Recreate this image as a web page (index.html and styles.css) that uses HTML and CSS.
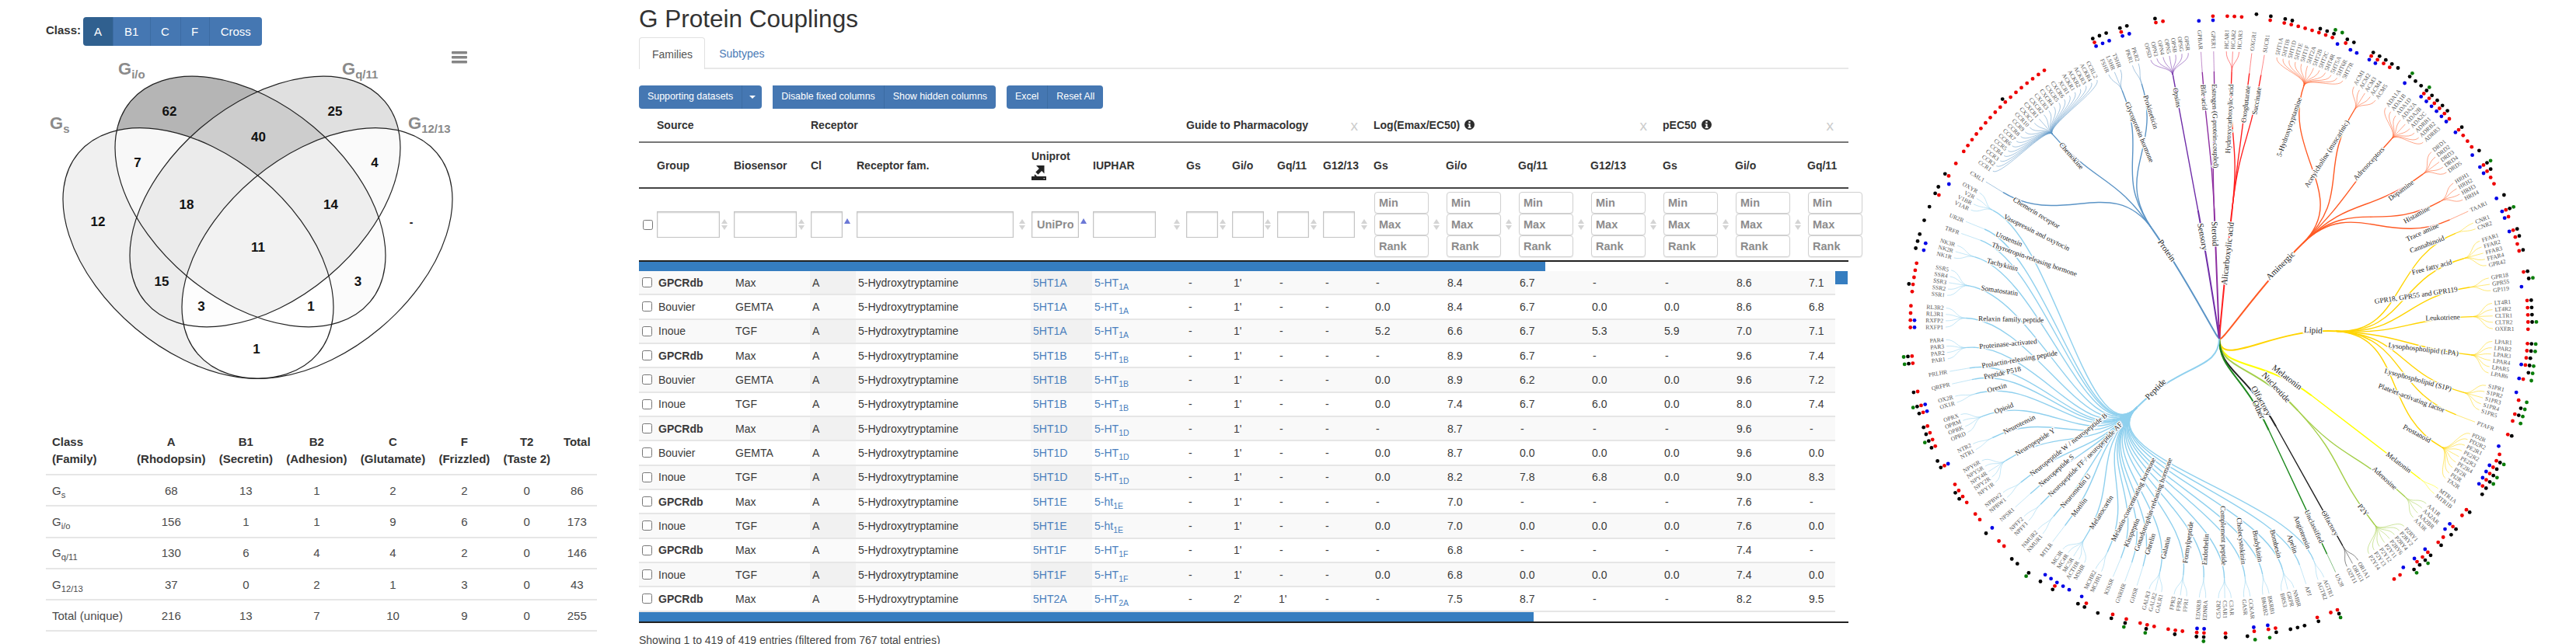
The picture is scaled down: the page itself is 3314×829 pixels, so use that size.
FILE: index.html
```html
<!DOCTYPE html>
<html lang="en">
<head>
  <meta charset="UTF-8" />
  <title>G Protein Couplings</title>
  <link rel="stylesheet" href="styles.css">
</head>
<body>
<div class="page">

  <div class="left">
    <div class="class-filter">
      <span class="class-label">Class:</span>
      <div class="btn-group class-btns">
        <a class="btn active">A</a><a class="btn">B1</a><a class="btn">C</a><a class="btn">F</a><a class="btn">Cross</a>
      </div>
    </div>

    <svg class="venn" viewBox="59 59 620 440" width="620" height="440">
      <defs>
        <ellipse id="e-s" cx="255" cy="326" rx="201" ry="126" transform="rotate(40 255 326)" />
        <ellipse id="e-i" cx="322" cy="259.5" rx="201" ry="126" transform="rotate(40 322 259.5)" />
        <ellipse id="e-q" cx="341" cy="259.5" rx="201" ry="126" transform="rotate(-40 341 259.5)" />
        <ellipse id="e-t" cx="408" cy="326" rx="201" ry="126" transform="rotate(-40 408 326)" />
        <clipPath id="c-s"><use href="#e-s" /></clipPath>
        <clipPath id="c-i"><use href="#e-i" /></clipPath>
        <clipPath id="c-q"><use href="#e-q" /></clipPath>
        <clipPath id="c-t"><use href="#e-t" /></clipPath>
      </defs>
      <g id="venn-regions"></g>
      <g class="venn-lines">
        <use href="#e-s" /><use href="#e-i" /><use href="#e-q" /><use href="#e-t" />
      </g>
      <g class="venn-names">
        <text x="64" y="166">G<tspan class="venn-sub" dy="5">s</tspan></text>
        <text x="152" y="96">G<tspan class="venn-sub" dy="5">i/o</tspan></text>
        <text x="440" y="96">G<tspan class="venn-sub" dy="5">q/11</tspan></text>
        <text x="525" y="166">G<tspan class="venn-sub" dy="5">12/13</tspan></text>
      </g>
      <g class="venn-nums">
        <text x="218" y="143">62</text>
        <text x="431" y="143">25</text>
        <text x="332.5" y="176">40</text>
        <text x="177" y="209">7</text>
        <text x="482" y="209">4</text>
        <text x="240" y="263">18</text>
        <text x="425.5" y="263">14</text>
        <text x="126" y="285">12</text>
        <text x="529" y="286" class="venn-dash">-</text>
        <text x="332" y="318">11</text>
        <text x="208" y="362">15</text>
        <text x="460.5" y="362">3</text>
        <text x="259" y="394">3</text>
        <text x="400" y="394">1</text>
        <text x="330" y="449">1</text>
      </g>
      <g class="venn-menu">
        <rect x="581" y="66" width="20" height="3.5" rx="1" />
        <rect x="581" y="72" width="20" height="3.5" rx="1" />
        <rect x="581" y="78" width="20" height="3.5" rx="1" />
      </g>
    </svg>

    <table class="summary">
      <thead>
        <tr><th>Class<br>(Family)</th><th>A<br>(Rhodopsin)</th><th>B1<br>(Secretin)</th><th>B2<br>(Adhesion)</th><th>C<br>(Glutamate)</th><th>F<br>(Frizzled)</th><th>T2<br>(Taste 2)</th><th>Total<br>&nbsp;</th></tr>
      </thead>
      <tbody>
        <tr><td>G<sub>s</sub></td><td>68</td><td>13</td><td>1</td><td>2</td><td>2</td><td>0</td><td>86</td></tr>
        <tr><td>G<sub>i/o</sub></td><td>156</td><td>1</td><td>1</td><td>9</td><td>6</td><td>0</td><td>173</td></tr>
        <tr><td>G<sub>q/11</sub></td><td>130</td><td>6</td><td>4</td><td>4</td><td>2</td><td>0</td><td>146</td></tr>
        <tr><td>G<sub>12/13</sub></td><td>37</td><td>0</td><td>2</td><td>1</td><td>3</td><td>0</td><td>43</td></tr>
        <tr><td>Total (unique)</td><td>216</td><td>13</td><td>7</td><td>10</td><td>9</td><td>0</td><td>255</td></tr>
      </tbody>
    </table>
  </div>

  <div class="main">
    <h2 class="title">G Protein Couplings</h2>
    <ul class="tabs">
      <li class="tab active">Families</li>
      <li class="tab">Subtypes</li>
    </ul>

    <div class="toolbar">
      <div class="btn-group">
        <a class="btn">Supporting datasets</a><a class="btn btn-caret"><span class="caret"></span></a>
      </div>
      <div class="btn-group square-left">
        <a class="btn">Disable fixed columns</a><a class="btn">Show hidden columns</a>
      </div>
      <div class="btn-group">
        <a class="btn">Excel</a><a class="btn">Reset All</a>
      </div>
    </div>

    <table class="couplings">
      <colgroup>
        <col class="col-check"><col class="col-source"><col class="col-source"><col class="col-cl"><col class="col-fam"><col class="col-uni"><col class="col-iuphar">
        <col class="col-cl"><col class="col-gi"><col class="col-cl"><col class="col-g12">
        <col class="col-val"><col class="col-val"><col class="col-val"><col class="col-val">
        <col class="col-val"><col class="col-val"><col class="col-last"><col class="col-gutter">
      </colgroup>
      <thead>
        <tr class="head-groups">
          <th></th>
          <th colspan="2">Source</th>
          <th colspan="4">Receptor</th>
          <th colspan="4"><span class="hide-x">x</span>Guide to Pharmacology</th>
          <th colspan="4"><span class="hide-x">x</span>Log(Emax/EC50)
            <svg class="info" viewBox="0 0 13 13" width="13" height="13"><circle cx="6.5" cy="6.5" r="6.5" /><rect class="info-i" x="5.4" y="2" width="2.2" height="2" /><path class="info-i" d="M4.6 5.2h3v4.4h1v1.3H4.6V9.6h1V6.5h-1z" /></svg>
          </th>
          <th colspan="4"><span class="hide-x">x</span>pEC50
            <svg class="info" viewBox="0 0 13 13" width="13" height="13"><circle cx="6.5" cy="6.5" r="6.5" /><rect class="info-i" x="5.4" y="2" width="2.2" height="2" /><path class="info-i" d="M4.6 5.2h3v4.4h1v1.3H4.6V9.6h1V6.5h-1z" /></svg>
          </th>
        </tr>
        <tr class="head-cols">
          <th></th><th>Group</th><th>Biosensor</th><th>Cl</th><th>Receptor fam.</th>
          <th>Uniprot
            <svg class="uni-icon" viewBox="0 0 19 20" width="19" height="20">
              <path d="M6 1h10.5v10.5l-3.4-3.4-4.6 4.6-3.2-3.2 4.6-4.6z" />
              <path d="M4.6 12.4l2.2 2.2-1.3 1.3-2.2-2.2z" />
              <rect y="15" width="19" height="5" rx="0.5" />
              <rect class="uni-notch" x="15.5" y="17" width="1.6" height="1.2" />
            </svg>
          </th>
          <th>IUPHAR</th><th>Gs</th><th>Gi/o</th><th>Gq/11</th><th>G12/13</th>
          <th>Gs</th><th>Gi/o</th><th>Gq/11</th><th>G12/13</th>
          <th>Gs</th><th>Gi/o</th><th colspan="2">Gq/11</th>
        </tr>
        <tr class="head-filters" id="filters"></tr>
      </thead>
      <tbody id="rows"></tbody>
    </table>

    <div class="info-line">Showing 1 to 419 of 419 entries (filtered from 767 total entries)</div>
  </div>

  <div class="tree-wrap">
    <svg id="tree" class="tree" viewBox="0 0 936 829" width="936" height="829"></svg>
  </div>

</div>
<script src="app.js"></script>
</body>
</html>
```

FILE: styles.css
```css
html, body {
  margin: 0;
  height: 829px;
  overflow: hidden;
  background: #fff;
}
body {
  font-family: "Liberation Sans", Arial, sans-serif;
  font-size: 14px;
  color: #3a3a3a;
}
sub {
  font-size: 75%;
  line-height: 0;
}
.page {
  display: flex;
  height: 829px;
}

/* buttons */
.btn-group {
  display: inline-flex;
  border-radius: 4px;
  overflow: hidden;
}
.btn {
  display: block;
  background: #4577b2;
  color: #fff;
  border-left: 1px solid #3c6ca3;
}
.btn:first-child {
  border-left: 0;
}
.btn.active {
  background: #30608f;
}

/* left column */
.left {
  width: 822px;
  flex: none;
  box-sizing: border-box;
  padding: 22px 0 0 59px;
}
.class-filter {
  display: flex;
  align-items: center;
  height: 37px;
}
.class-label {
  width: 48px;
  margin-top: -5px;
  font-size: 15px;
  font-weight: bold;
  color: #333;
}
.class-btns .btn {
  font-size: 15px;
  line-height: 37px;
  text-align: center;
}
.class-btns .btn:nth-child(1) { width: 38px; }
.class-btns .btn:nth-child(2) { width: 46.5px; }
.class-btns .btn:nth-child(3) { width: 38px; }
.class-btns .btn:nth-child(4) { width: 36px; }
.class-btns .btn:nth-child(5) { width: 67.5px; }

.venn {
  display: block;
}
.venn-lines use {
  fill: none;
  stroke: #222;
  stroke-width: 1.2;
}
.venn-names text {
  font-size: 22px;
  font-weight: bold;
  fill: #8a8a8a;
}
.venn-sub {
  font-size: 15px;
}
.venn-nums text {
  font-size: 17px;
  font-weight: bold;
  fill: #111;
  text-anchor: middle;
  dominant-baseline: central;
}
.venn-nums .venn-dash {
  font-size: 14px;
}
.venn-menu rect {
  fill: #858585;
}

.summary {
  width: 709px;
  margin-top: 51px;
  border-collapse: separate;
  border-spacing: 0;
  font-size: 15px;
}
.summary th, .summary td {
  padding: 0 8px;
  text-align: center;
}
.summary th {
  height: 59px;
  padding-bottom: 1px;
  line-height: 22px;
  font-weight: bold;
  color: #333;
  border-bottom: 2px solid #e6e6e6;
}
.summary td {
  height: 38.3px;
  color: #4a4a4a;
  border-bottom: 2px solid #e6e6e6;
}
.summary th:first-child, .summary td:first-child {
  text-align: left;
}

/* main column */
.main {
  width: 1556px;
  flex: none;
}
.title {
  margin: 0;
  height: 48px;
  font-size: 31.5px;
  line-height: 48px;
  font-weight: normal;
  color: #333;
}
.tabs {
  display: flex;
  height: 41px;
  margin: 0;
  padding: 0;
  list-style: none;
  box-sizing: border-box;
  border-bottom: 2px solid #e8e8e8;
}
.tab {
  height: 41px;
  box-sizing: border-box;
  padding: 12px 18px 0;
  line-height: 18px;
  color: #4a7ab5;
}
.tab.active {
  padding: 12px 15px 0 16px;
  color: #555;
  background: #fff;
  border: 1px solid #e0e0e0;
  border-bottom: 0;
  border-radius: 4px 4px 0 0;
}

.toolbar {
  display: flex;
  gap: 14px;
  height: 30px;
  margin-top: 21px;
}
.toolbar .btn {
  padding: 0 11px;
  font-size: 12.4px;
  line-height: 29px;
}
.toolbar .btn-caret {
  width: 26px;
  padding: 0;
  box-sizing: border-box;
}
.caret {
  display: block;
  width: 0;
  margin: 13px auto 0;
  border-top: 4px solid #fff;
  border-left: 4px solid transparent;
  border-right: 4px solid transparent;
}
.square-left {
  border-radius: 0 4px 4px 0;
}

/* couplings table */
.couplings {
  width: 1556px;
  table-layout: fixed;
  border-collapse: separate;
  border-spacing: 0;
}
.col-check { width: 22px; }
.col-source { width: 99px; }
.col-cl { width: 59px; }
.col-fam { width: 225px; }
.col-uni { width: 79px; }
.col-iuphar { width: 120px; }
.col-gi { width: 58px; }
.col-g12 { width: 65px; }
.col-val { width: 93px; }
.col-last { width: 37px; }
.col-gutter { width: 17px; }

.couplings th {
  position: relative;
  box-sizing: border-box;
  padding: 0 0 0 1px;
  text-align: left;
  font-weight: bold;
  color: #333;
  white-space: nowrap;
}
.head-groups th {
  height: 44px;
  border-bottom: 2px solid #777;
}
.hide-x {
  float: right;
  margin: 1px 19px 0 0;
  font-size: 19px;
  line-height: 16px;
  font-weight: normal;
  color: #ccc;
}
.info {
  margin: -3px 0 0 2px;
  vertical-align: middle;
}
.info circle {
  fill: #2c2c2c;
}
.info-i {
  fill: #fff;
}
.head-cols th {
  height: 59px;
  border-bottom: 2px solid #444;
}
.uni-icon {
  display: block;
  margin-top: 3px;
  fill: #222;
}
.uni-notch {
  fill: #ccc;
}
.head-filters th {
  height: 94px;
  border-bottom: 2px solid #222;
}
.head-filters input[type="checkbox"] {
  display: block;
  margin: 0 0 0 4px;
}
.flt {
  display: block;
  box-sizing: border-box;
  height: 34px;
  padding: 0 6px;
  font: bold 14.5px "Liberation Sans", Arial, sans-serif;
  border: 1px solid #c4c4c4;
  box-shadow: inset 0 1px 2px rgba(0, 0, 0, 0.2);
  background: #fff;
}
.flt::placeholder, .rng::placeholder {
  color: #8c8c8c;
  opacity: 1;
}
.flt-md { width: 81px; }
.flt-sm { width: 41px; }
.flt-lg { width: 202px; }
.flt-uni { width: 61px; }
.rng {
  display: block;
  box-sizing: border-box;
  width: 70px;
  height: 28px;
  margin-left: 1px;
  padding: 0 5px;
  font: bold 14.5px "Liberation Sans", Arial, sans-serif;
  border: 1px solid #d0d0d0;
  border-radius: 4px;
  box-shadow: 0 1px 1px rgba(0, 0, 0, 0.08);
  background: #fff;
}
.sort {
  position: absolute;
  top: 50%;
  right: 7px;
  width: 8px;
  height: 14px;
  margin-top: -7px;
}
.sort::before, .sort::after {
  content: "";
  display: block;
  width: 0;
  border-left: 4px solid transparent;
  border-right: 4px solid transparent;
}
.sort::before {
  border-bottom: 6px solid #d4d4d4;
  margin-bottom: 2px;
}
.sort::after {
  border-top: 6px solid #d4d4d4;
}
.sort.asc::before {
  margin-top: -1px;
  border-bottom: 7px solid #6b78d6;
}
.sort.asc::after {
  display: none;
}

.couplings td {
  box-sizing: border-box;
  height: 31.33px;
  padding: 0 0 0 3px;
  white-space: nowrap;
  overflow: hidden;
  border-bottom: 2px solid #e6e6e6;
}
.couplings td a {
  color: #4a7fbd;
}
.couplings td.check {
  padding-left: 4px;
}
.couplings td.check input {
  display: block;
  margin: 0;
}
.couplings td.dash {
  padding-left: 4px;
}
.couplings td.sorted {
  background: #fafafa;
}
#rows tr:nth-child(even) td {
  background: #f9f9f9;
}
#rows tr:nth-child(even) td.sorted {
  background: #f1f1f1;
}
#rows tr td.gutter {
  padding: 0;
  vertical-align: top;
  background: #fff;
  border-bottom: 0;
}
.thumb {
  width: 16px;
  height: 17px;
  background: #357dc0;
}
#rows tr td.bar-cell {
  height: 12px;
  padding: 0;
  background: #fff;
  border-bottom: 0;
}
#rows tr:last-child td.bar-cell {
  height: 14px;
  border-bottom: 2px solid #222;
}
.bar {
  height: 12px;
  background: #357dc0;
}
.info-line {
  margin-top: 12px;
  line-height: 20px;
  font-size: 14px;
  color: #444;
}

/* radial tree */
.tree-wrap {
  flex: 1;
}
.tree {
  display: block;
}
.tree path {
  fill: none;
}
.link-cat { stroke-width: 2; }
.link-fam { stroke-width: 1.4; }
.link-leaf { stroke-width: 0.9; stroke-opacity: 0.6; }
.link-stub { stroke: #5f1a8c; stroke-width: 3.2; }
.tree text {
  font-family: "Liberation Serif", "Times New Roman", serif;
  dominant-baseline: central;
}
.tree .lbl-leaf {
  font-size: 7.6px;
  fill: #555;
}
.tree .lbl-fam, .tree .lbl-cat {
  paint-order: stroke;
  stroke: #fff;
  stroke-width: 2.5px;
  stroke-linejoin: round;
}
.tree .lbl-fam {
  font-size: 9.2px;
  fill: #222;
}
.tree .lbl-cat {
  font-size: 11px;
  fill: #222;
}
.dot-b { fill: #0000e6; }
.dot-r { fill: #ee0000; }
.dot-k { fill: #000; }
.dot-g { fill: #0a7d0a; }
```

FILE: app.js
```js
// Venn regions, painted from single sets up to the full overlap
const vennRegions = [
  ["s", "#f0f0f0"], ["i", "#b5b5b5"], ["q", "#e0e0e0"], ["t", "#ffffff"],
  ["si", "#f8f8f8"], ["sq", "#ececec"], ["st", "#ffffff"], ["iq", "#cdcdcd"], ["it", "#fbfbfb"], ["qt", "#fafafa"],
  ["siq", "#ebebeb"], ["sit", "#ffffff"], ["sqt", "#fdfdfd"], ["iqt", "#eeeeee"],
  ["siqt", "#f2f2f2"]
];
document.getElementById("venn-regions").innerHTML = vennRegions.map(([sets, fill]) => {
  const open = [...sets].map(c => `<g clip-path="url(#c-${c})">`).join("");
  return `${open}<rect x="59" y="59" width="620" height="440" fill="${fill}" />${"</g>".repeat(sets.length)}`;
}).join("");

// Filter row of the couplings table
const sort = `<span class="sort"></span>`;
const sortAsc = `<span class="sort asc"></span>`;
const flt = (size, arrow = sort, ph = "") => `<th><input class="flt ${size}" placeholder="${ph}" />${arrow}</th>`;
const rng = `<th><input class="rng" placeholder="Min" /><input class="rng" placeholder="Max" /><input class="rng" placeholder="Rank" />${sort}</th>`;
document.getElementById("filters").innerHTML =
  `<th><input type="checkbox" /></th>` +
  flt("flt-md") + flt("flt-md") + flt("flt-sm", sortAsc) + flt("flt-lg") + flt("flt-uni", sortAsc, "UniProt") + flt("flt-md") +
  flt("flt-sm") + flt("flt-sm") + flt("flt-sm") + flt("flt-sm") +
  rng.repeat(6) + `<th colspan="2"><input class="rng" placeholder="Min" /><input class="rng" placeholder="Max" /><input class="rng" placeholder="Rank" /></th>`;

// group, sensor, uniprot, iuphar, sub, then Gs Gi/o Gq/11 G12/13 x3 (last block is cut at Gq/11)
const rows = [
  "GPCRdb Max 5HT1A 5-HT 1A - 1' - - - 8.4 6.7 - - 8.6 7.1",
  "Bouvier GEMTA 5HT1A 5-HT 1A - 1' - - 0.0 8.4 6.7 0.0 0.0 8.6 6.8",
  "Inoue TGF 5HT1A 5-HT 1A - 1' - - 5.2 6.6 6.7 5.3 5.9 7.0 7.1",
  "GPCRdb Max 5HT1B 5-HT 1B - 1' - - - 8.9 6.7 - - 9.6 7.4",
  "Bouvier GEMTA 5HT1B 5-HT 1B - 1' - - 0.0 8.9 6.2 0.0 0.0 9.6 7.2",
  "Inoue TGF 5HT1B 5-HT 1B - 1' - - 0.0 7.4 6.7 6.0 0.0 8.0 7.4",
  "GPCRdb Max 5HT1D 5-HT 1D - 1' - - - 8.7 - - - 9.6 -",
  "Bouvier GEMTA 5HT1D 5-HT 1D - 1' - - 0.0 8.7 0.0 0.0 0.0 9.6 0.0",
  "Inoue TGF 5HT1D 5-HT 1D - 1' - - 0.0 8.2 7.8 6.8 0.0 9.0 8.3",
  "GPCRdb Max 5HT1E 5-ht 1E - 1' - - - 7.0 - - - 7.6 -",
  "Inoue TGF 5HT1E 5-ht 1E - 1' - - 0.0 7.0 0.0 0.0 0.0 7.6 0.0",
  "GPCRdb Max 5HT1F 5-HT 1F - 1' - - - 6.8 - - - 7.4 -",
  "Inoue TGF 5HT1F 5-HT 1F - 1' - - 0.0 6.8 0.0 0.0 0.0 7.4 0.0",
  "GPCRdb Max 5HT2A 5-HT 2A - 2' 1' - - 7.5 8.7 - - 8.2 9.5"
];
const barRow = width => `<tr><td class="bar-cell" colspan="19"><div class="bar" style="width:${width}px"></div></td></tr>`;
const rowHtml = rows.map((line, i) => {
  const [group, sensor, uni, iuphar, sub, ...vals] = line.split(" ");
  const name = group === "GPCRdb" ? `<b>${group}</b>` : group;
  const gutter = i === 0 ? `<td class="gutter" rowspan="${rows.length}"><div class="thumb"></div></td>` : "";
  return `<tr><td class="check"><input type="checkbox" /></td><td>${name}</td><td>${sensor}</td>` +
    `<td class="sorted">A</td><td>5-Hydroxytryptamine</td><td class="sorted"><a>${uni}</a></td><td><a>${iuphar}<sub>${sub}</sub></a></td>` +
    vals.map(v => `<td class="${v === "-" ? "dash" : ""}">${v}</td>`).join("") + gutter + `</tr>`;
}).join("");
document.getElementById("rows").innerHTML = barRow(1166) + rowHtml + barRow(1151);

// Radial tree: category, colour, families as [name, "LEAF:dots ..."]
// dots: b r k g = Gs, Gi/o, Gq/11, G12/13 tracks
const tree = [
  ["Alicarboxylic acid", "#ff2020", [
    ["Hydroxycarboxylic acid", "HCAR1:r HCAR2:r HCAR3:r"],
    ["Oxoglutarate", "OXGR1:k"],
    ["Succinate", "SUCR1:rk"]]],
  ["Aminergic", "#ff5a24", [
    ["5-Hydroxytryptamine", "5HT1A:rk 5HT1B:rk 5HT1D:r 5HT1E:r 5HT1F:r 5HT2A:rk 5HT2B:rk 5HT2C:rkg 5HT4R:bg 5HT5A:rk 5HT6R:bk 5HT7R:b"],
    ["Acetylcholine (muscarinic)", "ACM1:brk ACM2:brk ACM3:rk ACM4:rk ACM5:k"],
    ["Adrenoceptors", "ADA1A:bkg ADA1B:k ADA1D:k ADA2A:brkg ADA2B:brk ADA2C:brk ADRB1:brk ADRB2:brk ADRB3:br"],
    ["Dopamine", "DRD1:brk DRD2:r DRD3:r DRD4:r DRD5:bk"],
    ["Histamine", "HRH1:brkg HRH2:brk HRH3:r HRH4:r"],
    ["Trace amine", "TAAR1:bk"]]],
  ["Lipid", "#ffd400", [
    ["Cannabinoid", "CNR1:brkg CNR2:br"],
    ["Free fatty acid", "FFAR1:brk FFAR2:rk FFAR3:r FFAR4:rk GPR42:"],
    ["GPR18, GPR55 and GPR119", "GPR18:rk GPR55:kg GP119:b"],
    ["Leukotriene", "LT4R1:rk LT4R2:rk CLTR1:rk CLTR2:rkg OXER1:r"],
    ["Lysophospholipid (LPA)", "LPAR1:rkg LPAR2:rkg LPAR3:rk LPAR4:brkg LPAR5:kg LPAR6:brg"],
    ["Lysophospholipid (S1P)", "S1PR1:b S1PR2:rg S1PR3:kg S1PR4:rkg S1PR5:rg"],
    ["Platelet-activating factor", "PTAFR:rk"],
    ["Prostanoid", "PD2R:b PD2R2:r PE2R1:rkg PE2R2:brk PE2R3:brkg PE2R4:brkg PF2R:brk PI2R:k TA2R:"]]],
  ["Melatonin", "#ffff00", [
    ["Melatonin", "MTR1A:rk MTR1B:r"]]],
  ["Nucleotide", "#a4cf4a", [
    ["Adenosine", "AA1R:brk AA2AR:bk AA2BR:r AA3R:rk"],
    ["P2Y", "P2RY1:brk P2RY2:rkg P2RY4:brk P2RY6:kg P2Y11:b P2Y12:r P2Y13:r P2Y14:"]]],
  ["Olfactory", "#222222", [
    ["Olfactory", "OR1A1: OR1G1: O2T11:"]]],
  ["Other", "#1f8a1f", [
    ["Unclassified", "US28:"]]],
  ["Peptide", "#8fd0ee", [
    ["Angiotensin", "AGTR1:rkg AGTR2:r"],
    ["Apelin", "APJ:rk"],
    ["Bombesin", "NMBR:k GRPR:k BRS3:k"],
    ["Bradykinin", "BKRB1:rk BKRB2:brg"],
    ["Cholecystokinin", "CCKAR:brg GASR:k"],
    ["Complement peptide", "C3AR: C5AR1:rk C5AR2:"],
    ["Endothelin", "EDNRA:brkg EDNRB:brk"],
    ["Formylpeptide", "FPR1:r FPR2:rk FPR3:r"],
    ["Galanin", "GALR1:r GALR2:rkg GALR3:r"],
    ["Ghrelin", "GHSR:rkg"],
    ["Gonadotrophin-releasing hormone", "GNRHR:rk"],
    ["Kisspeptin", "KISSR:k"],
    ["Melanin-concentrating hormone", "MCHR1:rk MCHR2:bk"],
    ["Melanocortin", "MSHR:b ACTHR:b MC5R:brk MC4R:b MC3R:bk"],
    ["Motilin", "MTLR:kg"],
    ["Neuromedin U", "NMUR1:k NMUR2:k"],
    ["Neuropeptide FF / neuropeptide AF", "NPFF1:r NPFF2:r"],
    ["Neuropeptide S", "NPSR1:bk"],
    ["Neuropeptide W / neuropeptide B", "NPBW1:r NPBW2:r"],
    ["Neuropeptide Y", "NPY1R:r NPY2R:rk NPY4R:rk NPY5R:r NPY6R:"],
    ["Neurotensin", "NTR1:brk NTR2:k"],
    ["Opioid", "OPRD:rk OPRK:rkg OPRM:rk OPRX:rk"],
    ["Orexin", "OX1R:brk OX2R:brkg"],
    ["Peptide P518", "QRFPR:rk"],
    ["Prolactin-releasing peptide", "PRLHR:"],
    ["Proteinase-activated", "PAR1:rkg PAR2:rkg PAR3: PAR4:"],
    ["Relaxin family peptide", "RXFP1:br RXFP2:br RL3R1:r RL3R2:r"],
    ["Somatostatin", "SSR1:r SSR2:rk SSR3:r SSR4:r SSR5:r"],
    ["Tachykinin", "NK1R:bk NK2R:bk NK3R:k"],
    ["Thyrotropin-releasing hormone", "TRFR:k"],
    ["Urotensin", "UR2R:k"],
    ["Vasopressin and oxytocin", "V1AR:rk V1BR:k V2R:b OXYR:rk"]]],
  ["Protein", "#5b94c6", [
    ["Chemerin receptor", "CML1:r"],
    ["Chemokine", "CCR1:r CCR2:r CCR3:r CCR4:r CCR5:r CCR6:r CCR7:r CCR8:r CCR9:r CCR10:rk CX3C1:r CXCR1:r CXCR2:r CXCR3:r CXCR4:r CXCR5:r CXCR6:r XCR1: ACKR1: ACKR2: ACKR3: ACKR4: CCRL2:"],
    ["Glycoprotein hormone", "FSHR:brk LSHR:bk TSHR:bk"],
    ["Prokineticin", "PKR1:brk PKR2:bk"]]],
  ["Sensory", "#6f2da8", [
    ["Opsins", "OPSD: OPN3: OPN4:rk OPN5:r OPSB: OPSG: OPSR:"]]],
  ["Steroid", "#8e2ea0", [
    ["Bile acid", "GPBAR:b"],
    ["Estrogen (G protein-coupled)", "GPER1:br"]]]
];

const CX = 477, CY = 418;       // centre of the leaf circle
const ROOT = [477, 435];        // where the category links meet
const UNIT = 4 / 3;             // degrees between two leaves of a family
const R_CAT = 150, R_FAM = 326, R_LEAF = 352;
const TRACK = { b: 392, r: 397.3, k: 402.6, g: 408 };

const pol = (a, r) => {
  const t = a * Math.PI / 180;
  return [+(CX + r * Math.sin(t)).toFixed(1), +(CY - r * Math.cos(t)).toFixed(1)];
};
const link = (a0, r0, a1, r1) => {
  const m = (r0 + r1) / 2;
  return `M${pol(a0, r0)}C${pol(a0, m)} ${pol(a1, m)} ${pol(a1, r1)}`;
};
// root link dips below the root, more for the categories that point sideways or down
const rootLink = (a, r) => {
  const dip = 42 * Math.min(1, 1 - Math.cos(a * Math.PI / 180));
  return `M${ROOT}C${ROOT[0]} ${ROOT[1] + dip} ${pol(a, r * 0.45)} ${pol(a, r)}`;
};
// text along a ray; outward = starts at r and runs away from the centre, else it ends at r
const rayText = (a, r, text, cls, outward) => {
  const [x, y] = pol(a, r);
  const right = ((a % 360) + 360) % 360 < 180;
  const rot = right ? a - 90 : a + 90;
  const anchor = right === outward ? "start" : "end";
  return `<text class="${cls}" x="${x}" y="${y}" text-anchor="${anchor}" transform="rotate(${rot.toFixed(2)} ${x} ${y})">${text}</text>`;
};

let angle = 1.5;
let lines = `<path class="link-stub" d="M${CX} ${CY}V${ROOT[1]}" />`, labels = "", dots = "";
tree.forEach(([catName, color, families]) => {
  const famAngles = families.map(([famName, leafText]) => {
    const leaves = leafText.split(" ").map(s => s.split(":"));
    const leafAngles = leaves.map(() => { const a = angle; angle += UNIT; return a; });
    angle += UNIT; // extra gap between families
    const famA = (leafAngles[0] + leafAngles[leafAngles.length - 1]) / 2;
    leaves.forEach(([leaf, marks], i) => {
      const a = leafAngles[i];
      lines += `<path class="link-leaf" stroke="${color}" d="${link(famA, R_FAM, a, R_LEAF)}" />`;
      labels += rayText(a, R_LEAF + 3, leaf, "lbl-leaf", true);
      [...marks].forEach(m => {
        const [x, y] = pol(a, TRACK[m]);
        dots += `<circle class="dot-${m}" cx="${x}" cy="${y}" r="2.4" />`;
      });
    });
    labels += rayText(famA, 310, famName, "lbl-fam", false);
    return famA;
  });
  const catA = famAngles.reduce((s, a) => s + a, 0) / famAngles.length;
  famAngles.forEach(famA => {
    lines += `<path class="link-fam" stroke="${color}" d="${link(catA, R_CAT, famA, R_FAM)}" />`;
  });
  lines += `<path class="link-cat" stroke="${color}" d="${rootLink(catA, R_CAT)}" />`;
  labels += rayText(catA, 133, catName, "lbl-cat", false);
});
document.getElementById("tree").innerHTML = lines + labels + dots;
```
